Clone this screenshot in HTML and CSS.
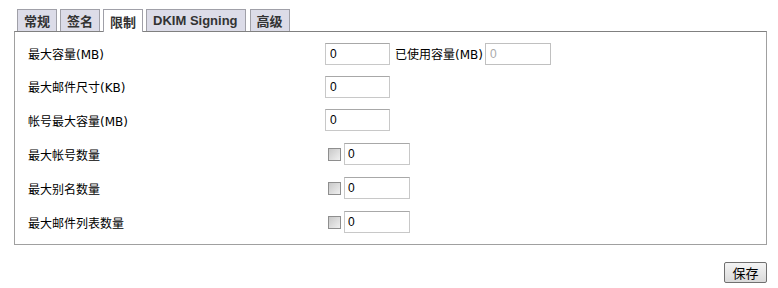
FILE: index.html
```html
<!DOCTYPE html>
<html>
<head>
<meta charset="utf-8">
<link rel="stylesheet" href="styles.css">
</head>
<body>
<div class="page">
  <div class="tabs">
    <span class="tab">常规</span>
    <span class="tab">签名</span>
    <span class="tab active">限制</span>
    <span class="tab wide">DKIM Signing</span>
    <span class="tab">高级</span>
  </div>
  <div class="panel">
    <div class="row r1">
      <div class="label">最大容量(MB)</div>
      <div class="field">
        <input class="txt" type="text" value="0">
        <span class="sub">已使用容量(MB)</span>
        <input class="txt disabled" type="text" value="0" disabled>
      </div>
    </div>
    <div class="row r2">
      <div class="label">最大邮件尺寸(KB)</div>
      <div class="field"><input class="txt" type="text" value="0"></div>
    </div>
    <div class="row">
      <div class="label">帐号最大容量(MB)</div>
      <div class="field"><input class="txt" type="text" value="0"></div>
    </div>
    <div class="row">
      <div class="label">最大帐号数量</div>
      <div class="field"><span class="cb"></span><input class="txt small" type="text" value="0"></div>
    </div>
    <div class="row">
      <div class="label">最大别名数量</div>
      <div class="field"><span class="cb"></span><input class="txt small" type="text" value="0"></div>
    </div>
    <div class="row">
      <div class="label">最大邮件列表数量</div>
      <div class="field"><span class="cb"></span><input class="txt small" type="text" value="0"></div>
    </div>
  </div>
  <div class="actions">
    <button class="btn" type="button">保存</button>
  </div>
</div>
</body>
</html>
```

FILE: styles.css
```css
html, body {
  margin: 0;
  padding: 0;
  background: #ffffff;
}
body {
  font-family: "DejaVu Sans", "Noto Sans CJK SC", sans-serif;
  font-size: 12px;
  color: #000;
}
.page {
  padding: 9px 11px 0 14px;
}
.tabs {
  display: flex;
  gap: 3px;
  padding-left: 3px;
  height: 22px;
}
.tab {
  display: flex;
  align-items: center;
  box-sizing: border-box;
  height: 22px;
  padding: 0 6px;
  border: 1px solid #a0a0a8;
  border-bottom: none;
  background: #dcdce8;
  font-family: "Liberation Sans", "Noto Sans CJK SC", sans-serif;
  font-weight: bold;
  font-size: 13px;
  color: #333;
}
.tab.wide {
  padding: 0 7px 0 6px;
  margin-right: 1px;
}
.tab.active {
  background: #ffffff;
  height: 23px;
  margin-bottom: -1px;
  position: relative;
  z-index: 1;
}
.panel {
  box-sizing: border-box;
  border: 1px solid #a0a0a0;
  border-top-color: #808080;
  height: 214px;
  padding: 5px 0 0 13px;
}
.row {
  display: flex;
  align-items: center;
  height: 34px;
}
.row.r1,
.row.r2 {
  height: 33px;
}
.label {
  width: 297px;
  font-size: 12px;
}
.field {
  display: flex;
  align-items: center;
}
.txt {
  box-sizing: border-box;
  width: 65px;
  height: 22px;
  border: 1px solid #c8c8c8;
  border-top-color: #a8a8a8;
  padding: 0 4px;
  font-family: "Liberation Sans", sans-serif;
  font-size: 12px;
  color: #000;
  background: #fff;
  margin: 0;
}
.txt.disabled {
  width: 66px;
  color: #aaa;
  border-color: #c0c0c0;
}
.txt.small {
  width: 66px;
  padding-left: 3px;
}
.sub {
  margin: 0 2px 0 5px;
}
.cb {
  box-sizing: border-box;
  width: 13px;
  height: 13px;
  margin: 0 3px 0 3px;
  border: 1px solid #8e8e8e;
  background: linear-gradient(135deg, #c8c8c8, #f0f0f0);
}
.actions {
  display: flex;
  justify-content: flex-end;
  padding-top: 17px;
}
.btn {
  width: 43px;
  height: 21px;
  padding: 0;
  border: 1px solid #707070;
  border-radius: 2px;
  background: linear-gradient(#f4f4f4, #dadada);
  font-family: "Noto Sans CJK SC", sans-serif;
  font-size: 13px;
  color: #000;
  line-height: 19px;
}
```
